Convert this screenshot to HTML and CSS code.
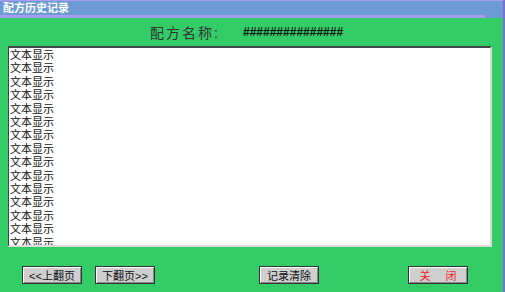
FILE: index.html
```html
<!DOCTYPE html>
<html lang="zh-CN">
<head>
    <meta charset="UTF-8">
    <title>配方历史记录</title>
    <link rel="stylesheet" href="styles.css">
</head>
<body>
    <div class="window">
        <div class="titlebar">
            <div class="title-text">配方历史记录</div>
            <div class="title-stripe"></div>
        </div>

        <div class="recipe-row">
            <span class="recipe-label">配方名称:</span>
            <span class="recipe-name">###############</span>
        </div>

        <div class="record-box">
            <div class="record-line">文本显示</div>
            <div class="record-line">文本显示</div>
            <div class="record-line">文本显示</div>
            <div class="record-line">文本显示</div>
            <div class="record-line">文本显示</div>
            <div class="record-line">文本显示</div>
            <div class="record-line">文本显示</div>
            <div class="record-line">文本显示</div>
            <div class="record-line">文本显示</div>
            <div class="record-line">文本显示</div>
            <div class="record-line">文本显示</div>
            <div class="record-line">文本显示</div>
            <div class="record-line">文本显示</div>
            <div class="record-line">文本显示</div>
            <div class="record-line">文本显示</div>
        </div>

        <div class="button-row">
            <button class="btn btn-prev">&lt;&lt;上翻页</button>
            <button class="btn btn-next">下翻页&gt;&gt;</button>
            <button class="btn btn-clear">记录清除</button>
            <button class="btn btn-close">关 闭</button>
        </div>
    </div>
</body>
</html>
```

FILE: styles.css
```css
body {
    margin: 0;
    padding: 0;
    background-color: #33cc66;
    font-family: "Liberation Sans", "Noto Sans CJK SC", sans-serif;
    overflow: hidden;
}

.window {
    width: 503px;
    height: 292px;
    border-right: 2px solid #7a6fd8;
    background-color: #33cc66;
}

.titlebar {
    height: 17px;
    background-color: #6b9bd2;
    border-top: 1px solid #a99cf2;
}

.title-text {
    height: 13px;
    padding-left: 3px;
    padding-top: 1px;
    color: #fff;
    font-size: 11px;
    font-weight: bold;
    line-height: 13px;
}

.title-stripe {
    width: 485px;
    height: 3px;
    background-color: #a99cf2;
}

.recipe-row {
    height: 28px;
    display: flex;
    align-items: center;
    padding-left: 150px;
}

.recipe-label {
    width: 93px;
    font-size: 14px;
    letter-spacing: 2px;
    color: #333;
}

.recipe-name {
    font-size: 12px;
    font-weight: bold;
    color: #111;
}

.record-box {
    margin-left: 8px;
    width: 481px;
    height: 197px;
    background-color: #fff;
    border-top: 2px solid #444;
    border-left: 1px solid #444;
    border-right: 2px solid #ddd;
    border-bottom: 2px solid #ddd;
    overflow: hidden;
}

.record-line {
    font-size: 11px;
    line-height: 13.4px;
    color: #111;
    padding-left: 1px;
}

.record-line:first-child {
    margin-top: 1px;
}

.button-row {
    display: flex;
    margin-top: 19px;
    padding-left: 22px;
}

.btn {
    width: 60px;
    height: 18px;
    padding: 0;
    background-color: #cfcfcf;
    border: 1px solid #333;
    box-shadow: inset 1px 1px 0 #fff, inset -1px -1px 0 #888;
    font-family: "Liberation Sans", "Noto Sans CJK SC", sans-serif;
    font-size: 11px;
    color: #111;
}

.btn-next {
    margin-left: 13px;
}

.btn-clear {
    margin-left: 104px;
}

.btn-close {
    margin-left: 89px;
    color: #ee2222;
    letter-spacing: 6px;
    padding-left: 6px;
}
```
